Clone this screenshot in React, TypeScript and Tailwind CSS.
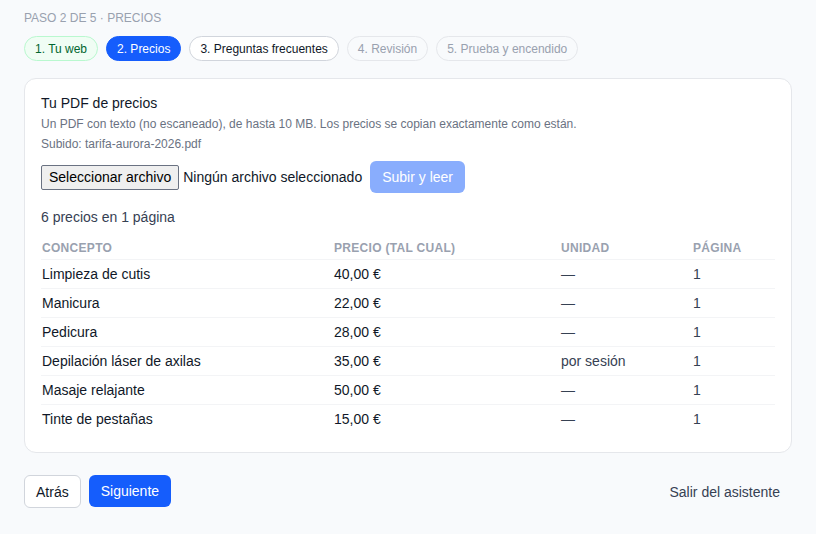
const steps = [
  { label: '1. Tu web', state: 'done' },
  { label: '2. Precios', state: 'current' },
  { label: '3. Preguntas frecuentes', state: 'next' },
  { label: '4. Revisión', state: 'locked' },
  { label: '5. Prueba y encendido', state: 'locked' },
];

const prices = [
  { concept: 'Limpieza de cutis', price: '40,00 €', unit: '—', page: '1' },
  { concept: 'Manicura', price: '22,00 €', unit: '—', page: '1' },
  { concept: 'Pedicura', price: '28,00 €', unit: '—', page: '1' },
  { concept: 'Depilación láser de axilas', price: '35,00 €', unit: 'por sesión', page: '1' },
  { concept: 'Masaje relajante', price: '50,00 €', unit: '—', page: '1' },
  { concept: 'Tinte de pestañas', price: '15,00 €', unit: '—', page: '1' },
];

const pillStyles: Record<string, string> = {
  done: 'border-green-200 bg-green-50 text-green-800',
  current: 'border-blue-600 bg-blue-600 text-white',
  next: 'border-gray-300 bg-white text-gray-900',
  locked: 'border-gray-200 bg-transparent text-gray-400',
};

export default function App() {
  return (
    <div className="min-h-screen bg-slate-50 px-6 pt-[10px] font-['Liberation_Sans',Arial,sans-serif] text-gray-900">
      {/* Step header */}
      <div className="text-xs leading-4 text-gray-400 uppercase">Paso 2 de 5 · Precios</div>
      <div className="mt-[10px] flex gap-2">
        {steps.map((s) => (
          <span
            key={s.label}
            className={`flex h-[25px] items-center rounded-full border px-2.5 text-xs leading-4 ${pillStyles[s.state]}`}
          >
            {s.label}
          </span>
        ))}
      </div>

      {/* Card */}
      <div className="mt-[17px] rounded-xl border border-gray-200 bg-white px-4 pt-[14px] pb-[19px]">
        <div className="text-sm leading-5 text-gray-900">Tu PDF de precios</div>
        <p className="mt-[3px] text-xs leading-4 text-gray-500">
          Un PDF con texto (no escaneado), de hasta 10 MB. Los precios se copian exactamente como están.
        </p>
        <p className="mt-[4px] text-xs leading-4 text-gray-500">Subido: tarifa-aurora-2026.pdf</p>

        <div className="mt-[9px] flex items-center">
          <button className="h-[25px] rounded-[2px] border border-gray-500 bg-[#efefef] px-[7px] text-sm leading-5 text-black">
            Seleccionar archivo
          </button>
          <span className="ml-1 text-sm text-gray-900">Ningún archivo seleccionado</span>
          <button className="ml-[8px] rounded-md bg-blue-600 px-3 py-1.5 text-sm leading-5 text-white opacity-50">
            Subir y leer
          </button>
        </div>

        <div className="mt-[14px] text-sm leading-5 text-gray-700">6 precios en 1 página</div>

        <div className="mt-[9px]">
          <div className="grid grid-cols-[292px_227px_132px_1fr] border-b border-gray-100 pt-1 pb-[3px] pl-px text-xs leading-4 font-bold tracking-wide text-gray-400 uppercase">
            <span>Concepto</span>
            <span>Precio (tal cual)</span>
            <span>Unidad</span>
            <span>Página</span>
          </div>
          <div className="divide-y divide-gray-100">
            {prices.map((p) => (
              <div
                key={p.concept}
                className="grid grid-cols-[292px_227px_132px_1fr] py-1 pl-px text-sm leading-5 text-gray-900"
              >
                <span>{p.concept}</span>
                <span>{p.price}</span>
                <span className="text-gray-700">{p.unit}</span>
                <span className="text-gray-700">{p.page}</span>
              </div>
            ))}
          </div>
        </div>
      </div>

      {/* Footer actions */}
      <div className="mt-[22px] flex items-center">
        <div className="flex gap-2">
          <button className="h-[33px] rounded-md border border-gray-300 bg-white px-[11px] text-sm text-gray-900">
            Atrás
          </button>
          <button className="h-[32px] rounded-md bg-blue-600 px-3 text-sm text-white">Siguiente</button>
        </div>
        <button className="ml-auto px-3 text-sm text-gray-700">Salir del asistente</button>
      </div>
    </div>
  );
}
